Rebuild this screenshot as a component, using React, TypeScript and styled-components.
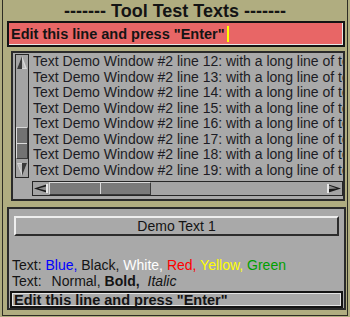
import styled, { createGlobalStyle } from 'styled-components';

const olive = '#b0ad80';
const panelGray = '#a9a9a9';
const ink = '#141414';

const GlobalStyle = createGlobalStyle`
	html, body {
		margin: 0;
		padding: 0;
		background: ${olive};
	}
	body {
		font-family: 'Liberation Sans', Arial, sans-serif;
		color: ${ink};
	}
`;

const Frame = styled.div`
	width: 350px;
	height: 317px;
	box-sizing: border-box;
	padding: 0 2px 1px;
	display: flex;
`;

const Window = styled.div`
	flex: 1;
	min-width: 0;
	display: flex;
	flex-direction: column;
	border: 1px solid #2e2d24;
	border-top: none;
`;

const Title = styled.div`
	height: 20px;
	line-height: 22px;
	text-align: center;
	font-size: 18px;
	font-weight: 700;
	white-space: pre;
`;

const EditBar = styled.div<{ $bg: string; $h: number }>`
	height: ${(p) => p.$h}px;
	box-sizing: border-box;
	display: flex;
	align-items: center;
	padding-left: 2px;
	background: ${(p) => p.$bg};
	border: 2px solid ${ink};
	box-shadow: inset -1px -1px 0 #e8e8e8;
	font-size: 14.5px;
	font-weight: 700;
	white-space: pre;
	overflow: hidden;
`;

const TopEdit = styled(EditBar)`
	margin: 1px 2px 0 4px;
`;

const BottomEdit = styled(EditBar)`
	margin: 2px 1px 0 1px;
	box-shadow: inset 1px 1px 0 #e4e4e4, inset -1px -1px 0 #e4e4e4;
`;

const Cursor = styled.span`
	width: 2px;
	height: 16px;
	margin-left: 2px;
	background: #ffff00;
`;

const ListPanel = styled.div`
	margin: 4px 2px 0 8px;
	height: 150px;
	box-sizing: border-box;
	border: 2px solid #2a2a2a;
	background: ${panelGray};
	display: flex;
	flex-direction: column;
	overflow: hidden;
`;

const ListBody = styled.div`
	display: flex;
	margin: 1px 0 0 2px;
	height: 124px;
	min-width: 0;
`;

const VScroll = styled.div`
	width: 14px;
	flex-shrink: 0;
	box-sizing: border-box;
	border: 1px solid #262626;
	background: #a4a4a4;
	display: flex;
	flex-direction: column;
`;

const ArrowCell = styled.div`
	height: 15px;
	display: flex;
	align-items: center;
	justify-content: center;
`;

const Track = styled.div`
	flex: 1;
	display: flex;
	flex-direction: column;
`;

const VThumb = styled.div`
	margin-top: 57px;
	height: 32px;
	box-sizing: border-box;
	border: 1px solid #3a3a3a;
	border-top-color: #d8d8d8;
	border-left-color: #d8d8d8;
	background: #727272;
	display: flex;
	flex-direction: column;
	justify-content: center;
`;

const ThumbRule = styled.div<{ $vertical?: boolean }>`
	background: #dcdcdc;
	${(p) => (p.$vertical ? 'width: 1px; height: 100%; margin-left: 50px;' : 'height: 1px; width: 100%;')}
`;

const Lines = styled.div`
	flex: 1;
	min-width: 0;
	margin-left: 4px;
	overflow: hidden;
	font-size: 14px;
	line-height: 15.5px;
	white-space: pre;
	color: #1c1c24;
`;

const HScroll = styled.div`
	margin: 3px 0 0 19px;
	height: 15px;
	box-sizing: border-box;
	border: 1px solid #262626;
	background: #a4a4a4;
	display: flex;
	align-items: stretch;
`;

const HArrowCell = styled.div`
	width: 16px;
	display: flex;
	align-items: center;
	justify-content: center;
`;

const HTrack = styled.div`
	flex: 1;
	display: flex;
`;

const HThumb = styled.div`
	width: 102px;
	box-sizing: border-box;
	border: 1px solid #3a3a3a;
	border-top-color: #d8d8d8;
	border-left-color: #d8d8d8;
	background: #7a7a7a;
	display: flex;
`;

const LowerPanel = styled.div`
	margin: 6px 1px 0 4px;
	height: 103px;
	box-sizing: border-box;
	border: 2px solid #2a2a2a;
	background: ${panelGray};
	display: flex;
	flex-direction: column;
`;

const DemoButton = styled.div`
	margin: 7px 5px 0 5px;
	height: 20px;
	box-sizing: border-box;
	border: 2px solid #2c2c2c;
	border-top-color: #eeeeee;
	border-left-color: #eeeeee;
	background: ${panelGray};
	text-align: center;
	font-size: 14px;
	line-height: 16px;
`;

const TextLine = styled.div<{ $top: number }>`
	margin: ${(p) => p.$top}px 0 0 3px;
	height: 16px;
	line-height: 16px;
	font-size: 14px;
	white-space: pre;
`;

const Word = styled.span<{ $color?: string; $bold?: boolean; $italic?: boolean; $gap?: number }>`
	color: ${(p) => p.$color ?? ink};
	font-weight: ${(p) => (p.$bold ? 700 : 400)};
	font-style: ${(p) => (p.$italic ? 'italic' : 'normal')};
	margin-left: ${(p) => p.$gap ?? 0}px;
`;

const UpArrow = () => (
	<svg width="10" height="13" viewBox="0 0 10 13">
		<polygon points="5,0 10,13 0,13" fill="#d8d8d8" />
		<polygon points="5,0 5,13 0,13" fill="#3a3a3a" />
		<polygon points="5,3 8,12 5,12" fill="#bcbcbc" />
	</svg>
);

const DownArrow = () => (
	<svg width="10" height="13" viewBox="0 0 10 13">
		<polygon points="0,0 10,0 5,13" fill="#d8d8d8" />
		<polygon points="5,0 10,0 5,13" fill="#3a3a3a" />
		<polygon points="1,1 5,1 5,10" fill="#bcbcbc" />
	</svg>
);

const LeftArrow = () => (
	<svg width="14" height="9" viewBox="0 0 14 9">
		<polygon points="0,4.5 14,0 14,9" fill="#1a1a1a" />
		<polygon points="4,4.5 14,2 14,7" fill="#8a8a8a" />
		<rect x="12" y="0" width="2" height="9" fill="#e8e8e8" />
	</svg>
);

const RightArrow = () => (
	<svg width="14" height="9" viewBox="0 0 14 9">
		<polygon points="14,4.5 0,0 0,9" fill="#1a1a1a" />
		<polygon points="10,4.5 2,1.5 2,5" fill="#8a8a8a" />
		<rect x="0" y="0" width="2" height="9" fill="#e8e8e8" />
	</svg>
);

const listLines = [12, 13, 14, 15, 16, 17, 18, 19];

export default function App() {
	return (
		<>
			<GlobalStyle />
			<Frame>
				<Window>
					<Title>------- Tool Test Texts -------</Title>
					<TopEdit $bg="#e86666" $h={26}>
						Edit this line and press "Enter"
						<Cursor />
					</TopEdit>
					<ListPanel>
						<ListBody>
							<VScroll>
								<ArrowCell>
									<UpArrow />
								</ArrowCell>
								<Track>
									<VThumb>
										<ThumbRule />
									</VThumb>
								</Track>
								<ArrowCell>
									<DownArrow />
								</ArrowCell>
							</VScroll>
							<Lines>
								{listLines.map((n) => (
									<div key={n}>Text Demo Window #2 line {n}: with a long line of text</div>
								))}
							</Lines>
						</ListBody>
						<HScroll>
							<HArrowCell>
								<LeftArrow />
							</HArrowCell>
							<HTrack>
								<HThumb>
									<ThumbRule $vertical />
								</HThumb>
							</HTrack>
							<HArrowCell>
								<RightArrow />
							</HArrowCell>
						</HScroll>
					</ListPanel>
					<LowerPanel>
						<DemoButton>Demo Text 1</DemoButton>
						<TextLine $top={21}>
							Text: <Word $color="#0000ff">Blue,</Word> Black, <Word $color="#ffffff">White,</Word>{' '}
							<Word $color="#ff0000">Red,</Word> <Word $color="#ffff00">Yellow,</Word>{' '}
							<Word $color="#00a000">Green</Word>
						</TextLine>
						<TextLine $top={0}>
							Text:<Word $gap={10}>Normal,</Word>
							<Word $bold $gap={4}>
								Bold,
							</Word>
							<Word $italic $gap={8}>
								Italic
							</Word>
						</TextLine>
						<BottomEdit $bg={panelGray} $h={17}>
							Edit this line and press "Enter"
						</BottomEdit>
					</LowerPanel>
				</Window>
			</Frame>
		</>
	);
}
